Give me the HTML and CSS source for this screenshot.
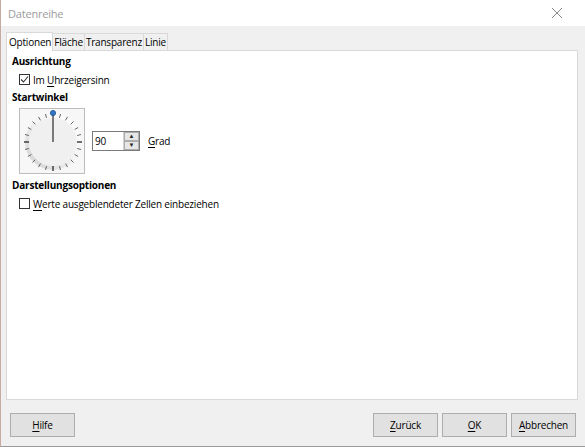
FILE: index.html
```html
<!DOCTYPE html>
<html lang="de">
<head>
  <meta charset="UTF-8">
  <title>Datenreihe</title>
  <link rel="stylesheet" href="styles.css">
</head>
<body>
  <div class="window">
    <div class="titlebar">
      <span class="title">Datenreihe</span>
      <svg class="close" width="12" height="12" viewBox="0 0 12 12">
        <path d="M1 1 L11 11 M11 1 L1 11" stroke="#8a8a8a" stroke-width="1"/>
      </svg>
    </div>

    <div class="tabs">
      <div class="tab active">Optionen</div>
      <div class="tab">Fläche</div>
      <div class="tab">Transparenz</div>
      <div class="tab">Linie</div>
    </div>

    <div class="panel">
      <div class="heading">Ausrichtung</div>
      <label class="check">
        <span class="box checked">
          <svg width="9" height="9" viewBox="0 0 9 9"><path d="M1 4.5 L3.5 7 L8 1.5" fill="none" stroke="#333" stroke-width="1.1"/></svg>
        </span>
        <span>Im <u>U</u>hrzeigersinn</span>
      </label>

      <div class="heading">Startwinkel</div>
      <div class="angle-row">
        <div class="dial">
          <svg id="dial" width="64" height="64" viewBox="0 0 64 64">
            <defs>
              <linearGradient id="ring" x1="1" y1="0" x2="0" y2="1">
                <stop offset="0" stop-color="#ffffff"/>
                <stop offset="0.45" stop-color="#f4f4f4"/>
                <stop offset="1" stop-color="#cfcfcf"/>
              </linearGradient>
            </defs>
            <circle cx="33" cy="33" r="28" fill="url(#ring)"/>
            <circle cx="33" cy="33" r="24" fill="#f0f0f0"/>
            <g id="ticks"></g>
            <line x1="33" y1="33" x2="33" y2="5" stroke="#7a7a7a" stroke-width="2"/>
            <circle cx="33" cy="4" r="2.6" fill="#2f78c8" stroke="#1d4f8a" stroke-width="0.8"/>
          </svg>
        </div>
        <div class="spin">
          <input class="spin-input" type="text" value="90">
          <div class="spin-buttons">
            <span class="spin-btn">&#9650;</span>
            <span class="spin-btn">&#9660;</span>
          </div>
        </div>
        <span class="unit"><u>G</u>rad</span>
      </div>

      <div class="heading">Darstellungsoptionen</div>
      <label class="check">
        <span class="box"></span>
        <span><u>W</u>erte ausgeblendeter Zellen einbeziehen</span>
      </label>
    </div>

    <div class="footer">
      <button class="btn"><u>H</u>ilfe</button>
      <div class="spacer"></div>
      <button class="btn"><u>Z</u>urück</button>
      <button class="btn"><u>O</u>K</button>
      <button class="btn"><u>A</u>bbrechen</button>
    </div>
  </div>

  <script>
    // tick marks every 15 degrees around the dial
    const ticks = document.getElementById('ticks');
    for (let i = 0; i < 24; i++) {
      const a = i * 15 * Math.PI / 180;
      const major = i % 6 === 0;
      const r1 = major ? 24 : 25, r2 = 29;
      const x1 = 33 + r1 * Math.sin(a), y1 = 33 - r1 * Math.cos(a);
      const x2 = 33 + r2 * Math.sin(a), y2 = 33 - r2 * Math.cos(a);
      const l = document.createElementNS('http://www.w3.org/2000/svg', 'line');
      l.setAttribute('x1', x1); l.setAttribute('y1', y1);
      l.setAttribute('x2', x2); l.setAttribute('y2', y2);
      l.setAttribute('stroke', major ? '#333' : '#555');
      l.setAttribute('stroke-width', major ? '1.4' : '0.9');
      ticks.appendChild(l);
    }
  </script>
</body>
</html>
```

FILE: styles.css
```css
body {
  margin: 0;
  font-family: "Open Sans", "Noto Sans", sans-serif;
  font-size: 10px;
  letter-spacing: -0.2px;
  color: #000000;
  background-color: #ffffff;
}

u {
  text-decoration-thickness: 1px;
  text-underline-offset: 2px;
}

.window {
  width: 584px;
  height: 446px;
  background-color: #f0f0f0;
  border-right: 1px solid #9a9a9a;
  border-bottom: 1px solid #9a9a9a;
  border-left: 1px solid #c9a9a0;
  display: flex;
  flex-direction: column;
  box-sizing: content-box;
}

.titlebar {
  height: 26px;
  background-color: #ffffff;
  display: flex;
  align-items: center;
  padding: 0 22px 0 7px;
}

.title {
  color: #9b9b9b;
  font-size: 11px;
  flex: 1;
}

.tabs {
  display: flex;
  align-items: flex-end;
  padding: 5px 0 0 5px;
  height: 19px;
}

.tab {
  height: 17px;
  line-height: 16px;
  padding: 0 1px;
  border: 1px solid #d9d9d9;
  border-bottom: none;
  border-left: none;
  background-color: #f0f0f0;
  box-sizing: border-box;
}

.tab.active {
  height: 19px;
  line-height: 18px;
  background-color: #ffffff;
  border-left: 1px solid #d9d9d9;
  padding: 0 1px 0 2px;
  margin-bottom: -1px;
  position: relative;
}

.panel {
  flex: 1;
  margin: 0 7px 0 5px;
  background-color: #ffffff;
  border: 1px solid #d9d9d9;
  padding: 2px 5px;
}

.heading {
  font-weight: bold;
  height: 17px;
  line-height: 17px;
}

.check {
  display: flex;
  align-items: center;
  gap: 3px;
  height: 19px;
  padding-left: 7px;
}

.box {
  width: 9px;
  height: 9px;
  border: 1px solid #333333;
  background-color: #ffffff;
  display: flex;
  align-items: center;
  justify-content: center;
}

.angle-row {
  display: flex;
  align-items: center;
  padding-left: 7px;
  margin-top: 2px;
  margin-bottom: 3px;
}

.dial {
  width: 64px;
  height: 64px;
  border: 1px solid #bdbdbd;
  background-color: #f7f7f7;
}

.dial svg {
  display: block;
}

.spin {
  display: flex;
  margin-left: 7px;
  height: 18px;
  border: 1px solid #7a7a7a;
}

.spin-input {
  width: 28px;
  border: none;
  padding: 0 0 0 2px;
  font-family: inherit;
  font-size: 10px;
  letter-spacing: -0.2px;
  outline: none;
}

.spin-buttons {
  display: flex;
  flex-direction: column;
  width: 15px;
  border-left: 1px solid #d0d0d0;
}

.spin-btn {
  flex: 1;
  background-color: #e6e6e6;
  border: 1px solid #adadad;
  font-size: 6px;
  line-height: 7px;
  letter-spacing: 0;
  text-align: center;
  color: #222222;
}

.unit {
  margin-left: 8px;
}

.footer {
  display: flex;
  gap: 4px;
  padding: 13px 9px 9px 9px;
}

.spacer {
  flex: 1;
}

.btn {
  width: 65px;
  height: 24px;
  background-color: #e1e1e1;
  border: 1px solid #adadad;
  font-family: inherit;
  font-size: 10px;
  letter-spacing: -0.2px;
  color: #000000;
  padding: 0;
}
```
